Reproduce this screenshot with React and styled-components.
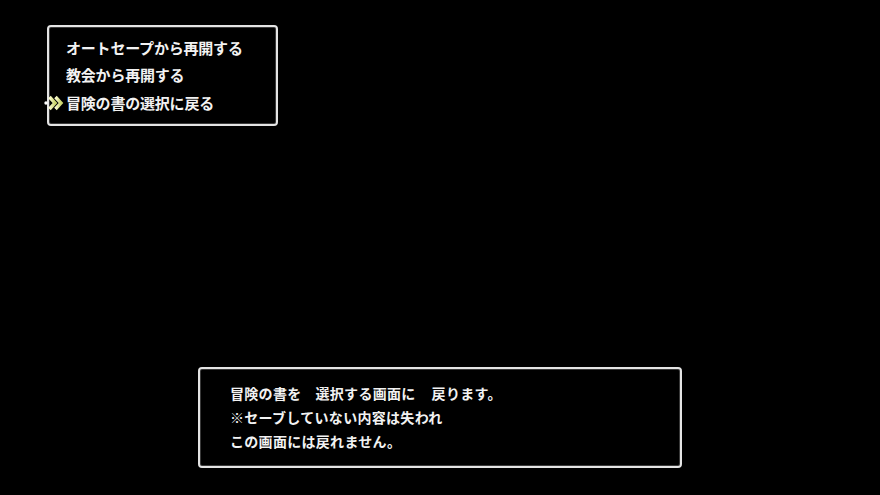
import React from 'react';
import styled, { createGlobalStyle } from 'styled-components';

const GlobalStyle = createGlobalStyle`
  html, body {
    margin: 0;
    padding: 0;
    background: #000;
  }
  body {
    font-family: "Noto Sans CJK JP", "Noto Sans", sans-serif;
    color: #f2f2f2;
  }
`;

const menuItems = ['オートセープから再開する', '教会から再開する', '冒険の書の選択に戻る'];
const selected = 2;

const App = () => {
  return (
    <>
      <GlobalStyle />
      <ScreenStyled>
        <MenuBox>
          {menuItems.map((label, i) => (
            <MenuRow key={label}>
              {i === selected && (
                <Cursor>
                  <svg width="22" height="16" viewBox="0 0 22 16">
                    <defs>
                      <linearGradient id="chev" x1="0" y1="0" x2="1" y2="0">
                        <stop offset="0" stopColor="#fdfdd2" />
                        <stop offset="1" stopColor="#ccd66e" />
                      </linearGradient>
                    </defs>
                    <circle cx="2" cy="8" r="1.7" fill="#ffffff" />
                    <polyline points="5.5,2 11,8 5.5,14" fill="none" stroke="url(#chev)" strokeWidth="3.4" strokeLinejoin="miter" />
                    <polyline points="11.5,2 17,8 11.5,14" fill="none" stroke="url(#chev)" strokeWidth="3.4" strokeLinejoin="miter" />
                  </svg>
                </Cursor>
              )}
              {label}
            </MenuRow>
          ))}
        </MenuBox>

        <MessageBox>
          <MessageLine>冒険の書を<Gap $w={14} />選択する画面に<Gap $w={16} />戻ります。</MessageLine>
          <MessageLine>※セーブしていない内容は失われ</MessageLine>
          <MessageLine>この画面には戻れません。</MessageLine>
        </MessageBox>
      </ScreenStyled>
    </>
  );
};

// styled components
const ScreenStyled = styled.div`
  width: 880px;
  height: 495px;
  box-sizing: border-box;
  padding: 25px 0 27px;
  display: flex;
  flex-direction: column;
  justify-content: space-between;
  background: #000;
  overflow: hidden;
`;

const Frame = styled.div`
  box-sizing: border-box;
  border: 2px solid #e4e4e4;
  border-radius: 4px;
  box-shadow: inset 0 0 0 1px #3a3a3a;
  background: #000;
`;

const MenuBox = styled(Frame)`
  align-self: flex-start;
  margin-left: 47px;
  width: 231px;
  height: 101px;
  padding: 7px 0 0 17px;
  display: flex;
  flex-direction: column;
`;

const MenuRow = styled.div`
  position: relative;
  height: 27.3px;
  line-height: 27.3px;
  font-size: 15px;
  font-weight: 700;
  letter-spacing: -0.2px;
  white-space: nowrap;
  text-shadow: 0 0 2px #000;
`;

const Cursor = styled.span`
  position: absolute;
  left: -22px;
  top: 6px;
  display: flex;
`;

const MessageBox = styled(Frame)`
  align-self: center;
  width: 484px;
  height: 101px;
  padding: 12px 0 0 30px;
  display: flex;
  flex-direction: column;
`;

const MessageLine = styled.div`
  height: 24px;
  line-height: 24px;
  font-size: 14px;
  font-weight: 700;
  letter-spacing: 0.3px;
  white-space: nowrap;
`;

const Gap = styled.span`
  display: inline-block;
  width: ${(p) => p.$w}px;
`;

export default App;
